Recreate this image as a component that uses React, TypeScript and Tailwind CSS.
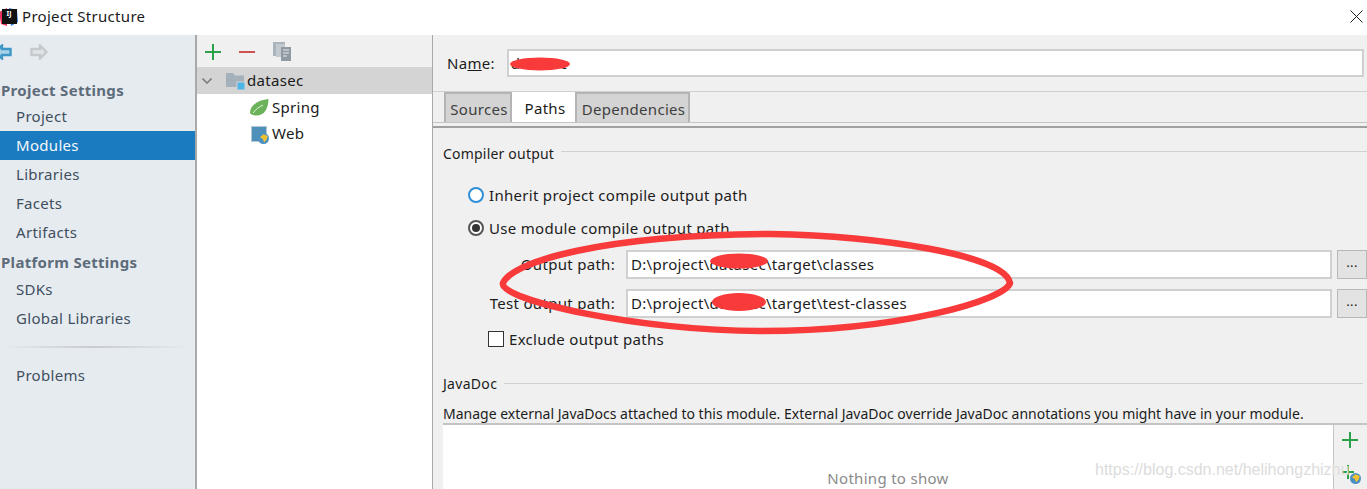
import React from 'react';

const sidebarItemClass = 'h-[29px] shrink-0 flex items-center pl-4 text-[#3f4f5f]';

function SidebarHeading({ label, className }: { label: string; className: string }) {
  return <div className={`pl-[1px] font-bold text-[#5d6b7a] text-[15px] leading-5 ${className}`}>{label}</div>;
}

function SidebarItem({ label, selected }: { label: string; selected?: boolean }) {
  return (
    <div className={`${sidebarItemClass} ${selected ? 'bg-[#1b7bc1] text-[#f4f8fb]' : ''}`}>{label}</div>
  );
}

function Sidebar() {
  return (
    <div className="w-[195px] shrink-0 bg-[#e6ebf0] flex flex-col">
      <div className="h-[34px] flex items-center gap-[18px] -ml-[6px]">
        <svg width="18" height="16" viewBox="0 0 18 16">
          <path d="M8 1.5 L1.5 8 L8 14.5 V11 H16.5 V5 H8 Z" fill="#a9d2e8" stroke="#3f97c8" strokeWidth="2.4" />
        </svg>
        <svg width="18" height="16" viewBox="0 0 18 16">
          <path d="M10 1.5 L16.5 8 L10 14.5 V11 H1.5 V5 H10 Z" fill="#dfe3e6" stroke="#c6c9cc" strokeWidth="2.4" />
        </svg>
      </div>
      <SidebarHeading label="Project Settings" className="mt-[11px] mb-[2px]" />
      <div className="shrink-0">
        <SidebarItem label="Project" />
        <SidebarItem label="Modules" selected />
        <SidebarItem label="Libraries" />
        <SidebarItem label="Facets" />
        <SidebarItem label="Artifacts" />
      </div>
      <SidebarHeading label="Platform Settings" className="mt-[5px] mb-[3px]" />
      <SidebarItem label="SDKs" />
      <SidebarItem label="Global Libraries" />
      <div className="mt-[13px] h-[2px] mr-[6px] bg-gradient-to-r from-[#e6ebf0] via-[#c8ccd0] to-[#e6ebf0]" />
      <div className={`${sidebarItemClass} mt-[13px]`}>Problems</div>
    </div>
  );
}

function GlobeBadge() {
  return (
    <svg className="absolute -right-[3px] -bottom-[3px]" width="11" height="11" viewBox="0 0 9 9">
      <circle cx="4.5" cy="4.5" r="4.5" fill="#4a90c2" />
      <path d="M1.5 3.5 L4.5 1 L8 2.5 L7 5.5 L5 7.5 L4 5 Z" fill="#f2c230" />
    </svg>
  );
}

function TreePanel() {
  return (
    <div className="w-[235px] shrink-0 bg-white flex flex-col">
      <div className="h-[32px] bg-[#f0f0f0] flex items-center pl-[8px] pt-[1px]">
        <svg width="16" height="16" viewBox="0 0 16 16">
          <path d="M8 0 V16 M0 8 H16" stroke="#2ba14b" strokeWidth="2" />
        </svg>
        <svg className="ml-[18px]" width="16" height="16" viewBox="0 0 16 16">
          <path d="M0 8 H16" stroke="#cf5250" strokeWidth="2" />
        </svg>
        <svg className="ml-[18px]" width="18" height="19" viewBox="0 0 18 19">
          <path d="M0 0 H12 V2 H3 V14 H0 Z" fill="#a9b4bd" />
          <rect x="3" y="2" width="9" height="13" fill="#c2c9cf" />
          <rect x="8" y="5" width="10" height="14" fill="#8f9aa3" />
          <path d="M10 8 H16 M10 11 H16 M10 14 H14" stroke="#e8e8e8" strokeWidth="1" />
        </svg>
      </div>
      <div className="h-[27px] bg-[#d4d4d4] flex items-center text-[#1a1a1a]">
        <svg className="ml-[5px]" width="10" height="6" viewBox="0 0 10 6">
          <path d="M0.5 0.5 L5 5 L9.5 0.5" fill="none" stroke="#7a7f83" strokeWidth="1.6" />
        </svg>
        <svg className="ml-[14px]" width="20" height="18" viewBox="0 0 20 18">
          <path d="M0 1 H7 L9 3.5 H18 V15 H0 Z" fill="#a4b0ba" />
          <rect x="11" y="10" width="8" height="8" fill="#4db6e6" stroke="#d4d4d4" strokeWidth="1" />
        </svg>
        <span className="ml-[1px]">datasec</span>
      </div>
      <div className="h-[27px] flex items-center pl-[53px] text-[#1a1a1a]">
        <svg width="19" height="17" viewBox="0 0 19 17">
          <path d="M18.5 0 C18.5 8 15 16.5 7 16.5 C3.5 16.5 1 15.5 0 14 C0 6 8 1 18.5 0 Z" fill="#6cb25a" />
          <path d="M3 14 C6 10 9 8 13 6" stroke="#e8f3e2" strokeWidth="1" fill="none" />
        </svg>
        <span className="ml-[3px]">Spring</span>
      </div>
      <div className="h-[25px] flex items-center pl-[54px] text-[#1a1a1a]">
        <span className="relative w-[16px] h-[16px] bg-[#4f90bb] border border-[#b4c8d6]">
          <GlobeBadge />
        </span>
        <span className="ml-[5px]">Web</span>
      </div>
    </div>
  );
}

function PathRow({ label, value }: { label: string; value: string }) {
  return (
    <div className="h-[29px] shrink-0 flex items-center">
      <div className="w-[193px] text-right pr-[11px]">{label}</div>
      <div className="w-[706px] h-full bg-white border-2 border-[#d0d0d0] flex items-center pl-[3px]">{value}</div>
      <div className="ml-[5px] w-[30px] h-full bg-[#e3e3e3] border border-[#b8b8b8] flex items-center justify-center text-[13px] leading-none pb-[4px]">...</div>
    </div>
  );
}

function ModulePanel() {
  return (
    <div className="relative flex-1 bg-[#f0f0f0] flex flex-col overflow-hidden text-[#1c1c1c]">
      <div className="h-[57px] shrink-0 flex items-center pl-[14px] border-b border-[#d0d0d0]">
        <span>
          Na<span className="underline">m</span>e:
        </span>
        <div className="ml-[12px] w-[857px] h-[28px] bg-white border-2 border-[#d0d0d0] flex items-center pl-[2px]">datasec</div>
      </div>
      <div className="h-[31px] shrink-0 flex items-end pl-[11px] border-b border-[#c4c4c4]">
        <div className="w-[68px] h-[30px] pt-[2px] pl-[2px] bg-[#d4d4d4] border-2 border-b-0 border-[#b4b4b4] flex items-center justify-center text-[#3f3f3f]">Sources</div>
        <div className="w-[63px] h-[30px] pt-[2px] pl-[3px] bg-white flex items-center justify-center">Paths</div>
        <div className="w-[115px] h-[30px] pt-[2px] pl-[2px] bg-[#d4d4d4] border-2 border-b-0 border-[#b4b4b4] flex items-center justify-center text-[#3f3f3f]">Dependencies</div>
      </div>
      <div className="mt-[3px] h-[2px] shrink-0 bg-[#a0a0a0]" />
      <div className="mt-[15px] shrink-0 flex items-center pl-[10px] h-[20px] tracking-[0.2px] text-[14px]">
        <span>Compiler output</span>
        <div className="ml-[7px] flex-1 h-px bg-[#d0d0d0] -translate-y-[2px]" />
      </div>
      <div className="mt-[21px] ml-[35px] h-[22px] shrink-0 flex items-center">
        <span className="w-[16px] h-[16px] rounded-full bg-white border-2 border-[#2f8fd8]" />
        <span className="ml-[5px]">Inherit project compile output path</span>
      </div>
      <div className="mt-[11px] ml-[35px] h-[22px] shrink-0 flex items-center">
        <span className="w-[16px] h-[16px] rounded-full bg-white border-2 border-[#555555] flex items-center justify-center">
          <span className="w-[8px] h-[8px] rounded-full bg-[#333333]" />
        </span>
        <span className="ml-[5px]">Use module compile output path</span>
      </div>
      <div className="mt-[11px] shrink-0 flex flex-col gap-[10px]">
        <PathRow label="Output path:" value={'D:\\project\\datasec\\target\\classes'} />
        <PathRow label="Test output path:" value={'D:\\project\\datasec\\target\\test-classes'} />
      </div>
      <div className="mt-[10px] ml-[55px] h-[22px] shrink-0 flex items-center">
        <span className="w-[16px] h-[16px] bg-white border border-[#333333]" />
        <span className="ml-[5px]">Exclude output paths</span>
      </div>
      <div className="mt-[23px] shrink-0 flex items-center pl-[10px] h-[20px] tracking-[0.3px] text-[14px]">
        <span>JavaDoc</span>
        <div className="ml-[7px] mr-[4px] flex-1 h-px bg-[#d0d0d0]" />
      </div>
      <div className="mt-[11px] shrink-0 pl-[10px] h-[19px] text-[14px] tracking-normal leading-[20px] whitespace-nowrap">
        Manage external JavaDocs attached to this module. External JavaDoc override JavaDoc annotations you might have in your module.
      </div>
      <div className="flex-1 ml-[10px] flex border-t-2 border-[#c4c4c4]">
        <div className="w-[891px] bg-white border-r border-[#c4c4c4] flex justify-center pt-[42px] text-[#8a8a8a]">Nothing to show</div>
        <div className="flex-1 flex flex-col items-center pt-[7px] gap-[17px] pr-[2px]">
          <svg width="16" height="16" viewBox="0 0 16 16">
            <path d="M8 0 V16 M0 8 H16" stroke="#2ba14b" strokeWidth="2" />
          </svg>
          <span className="relative w-[16px] h-[16px]">
            <svg width="12" height="14" viewBox="0 0 12 14">
              <path d="M6 0 V14 M0 7 H12" stroke="#2ba14b" strokeWidth="2" />
            </svg>
            <GlobeBadge />
          </span>
        </div>
      </div>
    </div>
  );
}

export default function App() {
  return (
    <div className="relative w-[1367px] h-[489px] overflow-hidden bg-white flex flex-col text-[15px] tracking-[0.3px] font-['Noto_Sans','Open_Sans',sans-serif]">
      <div className="h-[33px] mb-[2px] shrink-0 bg-white flex items-center justify-between text-[#1c1c1c]">
        <div className="flex items-center">
          <span className="relative w-[18px] h-[18px] flex items-center justify-center">
            <svg className="absolute left-[-1px] top-[0px]" width="19" height="18" viewBox="0 0 19 18">
              <path d="M0 4 L8 0 L8 18 L2 16 Z" fill="#e8335f" />
              <path d="M10 0 L18 2 L19 14 L12 18 Z" fill="#2f80ed" />
            </svg>
            <span className="relative w-[15px] h-[15px] bg-[#111111] text-white text-[7px] font-bold leading-[9px] text-center tracking-normal">IJ</span>
          </span>
          <span className="ml-[4px]">Project Structure</span>
        </div>
        <svg className="mr-[4px]" width="13" height="13" viewBox="0 0 13 13">
          <path d="M0.5 0.5 L12.5 12.5 M12.5 0.5 L0.5 12.5" stroke="#222222" strokeWidth="1" />
        </svg>
      </div>
      <div className="flex-1 flex min-h-0">
        <Sidebar />
        <div className="w-[2px] shrink-0 bg-[#a9a9a9]" />
        <TreePanel />
        <div className="w-[1px] shrink-0 bg-[#a9a9a9]" />
        <ModulePanel />
      </div>

      {/* red annotation drawn on top of the screenshot */}
      <svg className="absolute left-0 top-0 pointer-events-none" width="1367" height="489" viewBox="0 0 1367 489">
        <path
          d="M503 283 C512 262 600 235 770 234 C880 236 1005 255 1010 283 C1005 300 900 331 760 331 C640 331 498 300 503 283 Z"
          fill="none"
          stroke="#f83a3a"
          strokeWidth="6.5"
        />
        <ellipse cx="540" cy="64" rx="30" ry="6.5" fill="#f83a3a" />
        <ellipse cx="739" cy="261" rx="29" ry="7.5" fill="#f83a3a" />
        <ellipse cx="739" cy="302" rx="27" ry="9" fill="#f83a3a" />
      </svg>
      <div className="absolute left-[1095px] top-[458px] text-[16px] tracking-normal text-[#dcdcdc] font-['Liberation_Sans',sans-serif] whitespace-nowrap">
        https://blog.csdn.net/helihongzhizhu
      </div>
    </div>
  );
}
